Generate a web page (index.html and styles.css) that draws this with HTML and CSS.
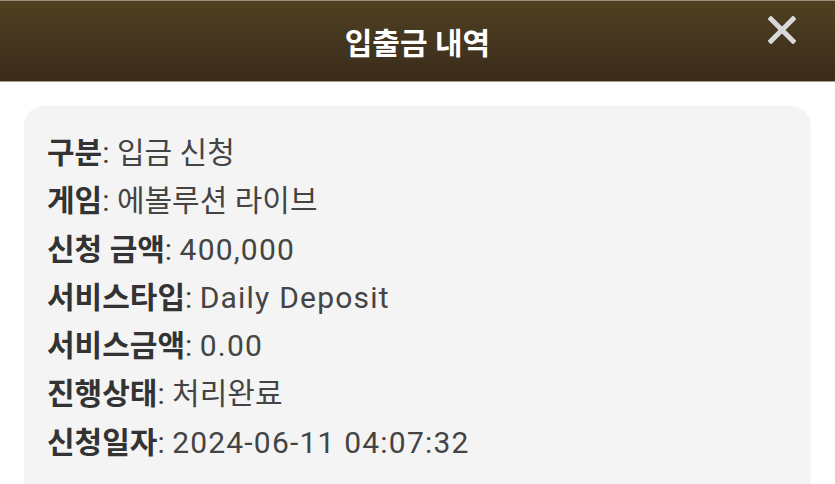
FILE: index.html
```html
<!DOCTYPE html>
<html lang="ko">
<head>
<meta charset="utf-8">
<title>입출금 내역</title>
<link rel="stylesheet" href="styles.css">
</head>
<body>
<header class="topbar">
  <h1 class="title">입출금 내역</h1>
  <button class="close" aria-label="닫기">
    <svg width="28" height="28" viewBox="0 0 28 28"><path d="M3 3 L25 25 M25 3 L3 25" stroke="#d9d9d9" stroke-width="5" stroke-linecap="square"/></svg>
  </button>
</header>
<main class="card">
  <div class="row"><span class="label">구분</span>: 입금 신청</div>
  <div class="row"><span class="label">게임</span>: 에볼루션 라이브</div>
  <div class="row"><span class="label">신청 금액</span>: <span class="latin">400,000</span></div>
  <div class="row"><span class="label">서비스타입</span>: <span class="latin">Daily Deposit</span></div>
  <div class="row"><span class="label">서비스금액</span>: <span class="latin">0.00</span></div>
  <div class="row"><span class="label">진행상태</span>: 처리완료</div>
  <div class="row"><span class="label">신청일자</span>: <span class="latin">2024-06-11 04:07:32</span></div>
</main>
</body>
</html>
```
FILE: styles.css
```css
html, body {
  margin: 0;
  padding: 0;
  background: #ffffff;
  overflow: hidden;
}
body {
  font-family: Roboto, "Noto Sans CJK KR", sans-serif;
}
.topbar {
  position: relative;
  height: 80px;
  display: flex;
  align-items: center;
  justify-content: center;
  background: linear-gradient(180deg, #51411f 0%, #443620 50%, #3a2c18 100%);
  border-top: 1px solid #9a8f7a;
  border-bottom: 1px solid #a89e8e;
}
.title {
  margin: 0;
  color: #ffffff;
  font-size: 30px;
  font-weight: 700;
  letter-spacing: 0;
}
.close {
  position: absolute;
  right: 38px;
  top: 14px;
  width: 30px;
  height: 30px;
  padding: 0;
  border: 0;
  background: none;
  display: flex;
  align-items: center;
  justify-content: center;
}
.card {
  margin: 24px 24px 0;
  background: #f4f4f4;
  border-radius: 20px;
  padding: 23px 23px 30px;
  min-height: 420px;
}
.row {
  font-size: 30px;
  line-height: 48.3px;
  color: #444444;
  white-space: nowrap;
}
.label {
  font-weight: 700;
  color: #333333;
}
.latin {
  letter-spacing: 1.2px;
}
```
